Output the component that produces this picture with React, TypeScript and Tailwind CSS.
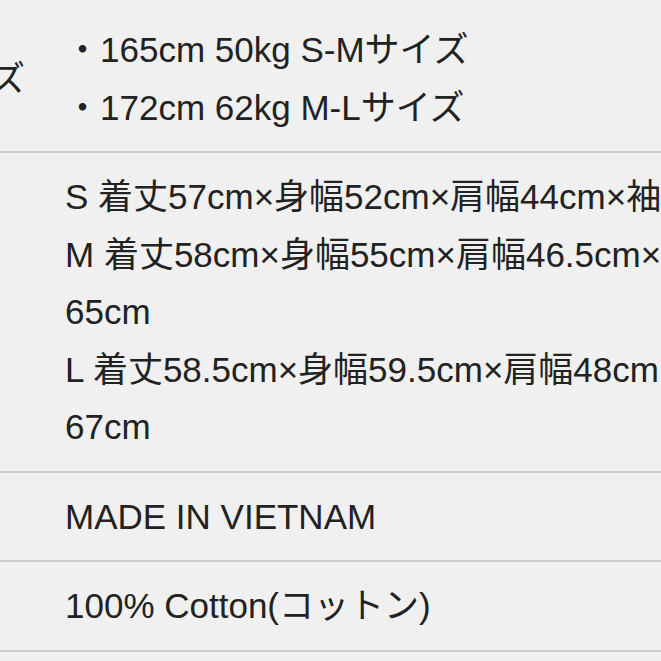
export default function App() {
  const rows = [
    {
      label: "モデル着用サイズ",
      lines: ["・165cm 50kg S-Mサイズ", "・172cm 62kg M-Lサイズ"],
      first: true,
    },
    {
      label: "",
      lines: [
        "S 着丈57cm×身幅52cm×肩幅44cm×袖丈63cm",
        "M 着丈58cm×身幅55cm×肩幅46.5cm×袖丈",
        "65cm",
        "L 着丈58.5cm×身幅59.5cm×肩幅48cm×袖丈",
        "67cm",
      ],
    },
    { label: "", lines: ["MADE IN VIETNAM"] },
    { label: "", lines: ["100% Cotton(コットン)"] },
    { label: "", lines: [""] },
  ]

  return (
    <div
      className="h-[661px] w-[661px] overflow-hidden bg-[#f0f0f0] text-[#222222] text-[35px] leading-[57.5px]"
      style={{ fontFamily: '"Liberation Sans", "Noto Sans CJK JP", sans-serif' }}
    >
      {rows.map((row, idx) => (
        <div
          key={idx}
          className={
            "flex items-center border-b-2 border-[#cdcdcd] pb-[15px] " +
            (row.first ? "pt-[21px]" : "pt-[15px]")
          }
        >
          <div className="ml-[-254px] w-[319px] shrink-0 whitespace-nowrap">{row.label}</div>
          <div className="flex-1 whitespace-nowrap">
            {row.lines.map((line, i) => (
              <div key={i} className="min-h-[57.5px]">
                {line}
              </div>
            ))}
          </div>
        </div>
      ))}
    </div>
  )
}
